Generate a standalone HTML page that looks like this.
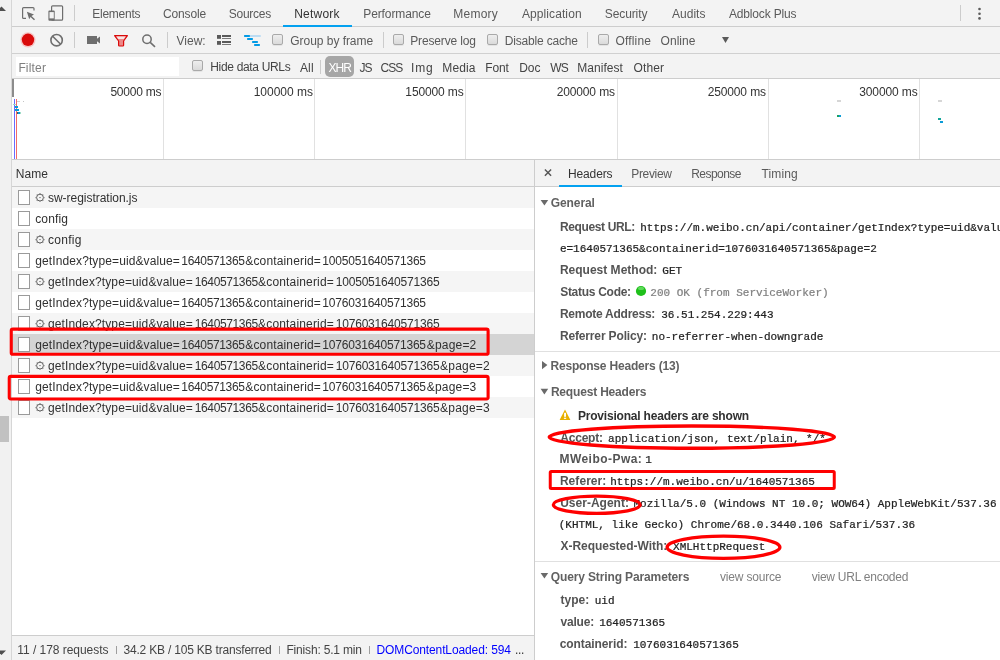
<!DOCTYPE html>
<html><head><meta charset="utf-8"><title>DevTools</title>
<style>
html,body{margin:0;padding:0;}
body{width:1000px;height:660px;position:relative;overflow:hidden;background:#fff;font:12px "Liberation Sans",sans-serif;}
.a{position:absolute;}
.t{position:absolute;white-space:pre;line-height:20px;height:20px;}
.s{font:12px "Liberation Sans",sans-serif;line-height:20px;}
.b{font:bold 12px "Liberation Sans",sans-serif;line-height:20px;}
.m{font:11px "Liberation Mono",monospace;line-height:20px;-webkit-text-stroke:0.22px currentColor;}
.cb{position:absolute;width:9px;height:9px;border:1px solid #a9a9a9;border-radius:2px;background:linear-gradient(#eeeeee,#dadada);box-shadow:0 1px 0 rgba(0,0,0,.06);}
.sep{position:absolute;width:1px;background:#ccc;}
.fi{position:absolute;left:18px;width:10px;height:13px;border:1px solid #9a9a9a;background:#fff;}
.row{position:absolute;left:12px;width:522px;height:21px;}
svg{position:absolute;overflow:visible;}
</style></head><body>

<!-- top toolbars background -->
<div class="a" style="left:0;top:0;width:1000px;height:78px;background:#f3f3f3;"></div>
<div class="a" style="left:12px;top:26px;width:988px;height:1px;background:#cdcdcd;"></div>
<div class="a" style="left:12px;top:53px;width:988px;height:1px;background:#d0d0d0;"></div>
<div class="a" style="left:12px;top:78px;width:988px;height:1px;background:#cdcdcd;"></div>
<!-- network tab underline -->
<div class="a" style="left:283px;top:25px;width:69px;height:2px;background:#03a1f0;"></div>

<!-- timeline overview -->
<div class="a" style="left:12px;top:79px;width:988px;height:80px;background:#fff;"></div>
<div class="a" style="left:163px;top:79px;width:1px;height:80px;background:#e1e1e1;"></div>
<div class="a" style="left:314px;top:79px;width:1px;height:80px;background:#e1e1e1;"></div>
<div class="a" style="left:465px;top:79px;width:1px;height:80px;background:#e1e1e1;"></div>
<div class="a" style="left:617px;top:79px;width:1px;height:80px;background:#e1e1e1;"></div>
<div class="a" style="left:768px;top:79px;width:1px;height:80px;background:#e1e1e1;"></div>
<div class="a" style="left:919px;top:79px;width:1px;height:80px;background:#e1e1e1;"></div>
<div class="a" style="left:12px;top:159px;width:988px;height:1px;background:#cdcdcd;"></div>
<!-- overview marks -->
<div class="a" style="left:12px;top:79px;width:2px;height:18px;background:#8c8c8c;"></div>
<div class="a" style="left:14px;top:99px;width:1px;height:60px;background:#6b6bff;"></div>
<div class="a" style="left:16px;top:99px;width:1px;height:60px;background:#f26a6a;"></div>
<div class="a" style="left:17px;top:101px;width:3px;height:1px;background:#d4d4d4;"></div>
<div class="a" style="left:23px;top:101px;width:1px;height:1px;background:#c4c4c4;"></div>
<div class="a" style="left:13px;top:104px;width:3px;height:1px;background:#9fdcc8;"></div>
<div class="a" style="left:15px;top:106px;width:3px;height:2px;background:#0a9bd8;"></div>
<div class="a" style="left:15px;top:109px;width:4px;height:2px;background:#0a9bd8;"></div>
<div class="a" style="left:17px;top:112px;width:1px;height:2px;background:#555;"></div>
<div class="a" style="left:18px;top:112px;width:2px;height:2px;background:#0a9bd8;"></div>
<div class="a" style="left:20px;top:112px;width:1px;height:2px;background:#9fdcc8;"></div>
<div class="a" style="left:837px;top:100px;width:4px;height:2px;background:#d6d6d6;"></div>
<div class="a" style="left:837px;top:115px;width:2px;height:2px;background:#1aa260;"></div><div class="a" style="left:839px;top:115px;width:2px;height:2px;background:#0a9bd8;"></div>
<div class="a" style="left:938px;top:100px;width:4px;height:2px;background:#d6d6d6;"></div>
<div class="a" style="left:938px;top:118px;width:3px;height:2px;background:#12a59a;"></div>
<div class="a" style="left:940px;top:121px;width:3px;height:2px;background:#0a9bd8;"></div>

<!-- grid header -->
<div class="a" style="left:12px;top:160px;width:988px;height:26px;background:#f3f3f3;"></div>
<div class="a" style="left:12px;top:186px;width:988px;height:1px;background:#cdcdcd;"></div>

<!-- rows -->
<div class="row" style="top:187px;background:#f5f5f5;"></div>
<div class="row" style="top:229px;background:#f5f5f5;"></div>
<div class="row" style="top:271px;background:#f5f5f5;"></div>
<div class="row" style="top:313px;background:#f5f5f5;"></div>
<div class="row" style="top:334px;background:#d4d4d4;"></div>
<div class="row" style="top:355px;background:#f5f5f5;"></div>
<div class="row" style="top:397px;background:#f5f5f5;"></div>
<div class="fi" style="top:190px;"></div>
<div class="fi" style="top:211px;"></div>
<div class="fi" style="top:232px;"></div>
<div class="fi" style="top:253px;"></div>
<div class="fi" style="top:274px;"></div>
<div class="fi" style="top:295px;"></div>
<div class="fi" style="top:316px;"></div>
<div class="fi" style="top:337px;"></div>
<div class="fi" style="top:358px;"></div>
<div class="fi" style="top:379px;"></div>
<div class="fi" style="top:400px;"></div>

<svg style="left:0;top:0" width="60" height="660" viewBox="0 0 60 660">
<circle cx="40.0" cy="197.6" r="3.4" fill="none" stroke="#505050" stroke-width="0.9"/><path d="M43.80 197.60L44.50 197.60M42.69 200.29L43.18 200.78M40.00 201.40L40.00 202.10M37.31 200.29L36.82 200.78M36.20 197.60L35.50 197.60M37.31 194.91L36.82 194.42M40.00 193.80L40.00 193.10M42.69 194.91L43.18 194.42" stroke="#777" stroke-width="1.3"/><path d="M39.2 197.6H40.8" stroke="#777" stroke-width="0.9"/>
<circle cx="40.0" cy="239.6" r="3.4" fill="none" stroke="#505050" stroke-width="0.9"/><path d="M43.80 239.60L44.50 239.60M42.69 242.29L43.18 242.78M40.00 243.40L40.00 244.10M37.31 242.29L36.82 242.78M36.20 239.60L35.50 239.60M37.31 236.91L36.82 236.42M40.00 235.80L40.00 235.10M42.69 236.91L43.18 236.42" stroke="#777" stroke-width="1.3"/><path d="M39.2 239.6H40.8" stroke="#777" stroke-width="0.9"/>
<circle cx="40.0" cy="281.6" r="3.4" fill="none" stroke="#505050" stroke-width="0.9"/><path d="M43.80 281.60L44.50 281.60M42.69 284.29L43.18 284.78M40.00 285.40L40.00 286.10M37.31 284.29L36.82 284.78M36.20 281.60L35.50 281.60M37.31 278.91L36.82 278.42M40.00 277.80L40.00 277.10M42.69 278.91L43.18 278.42" stroke="#777" stroke-width="1.3"/><path d="M39.2 281.6H40.8" stroke="#777" stroke-width="0.9"/>
<circle cx="40.0" cy="323.6" r="3.4" fill="none" stroke="#505050" stroke-width="0.9"/><path d="M43.80 323.60L44.50 323.60M42.69 326.29L43.18 326.78M40.00 327.40L40.00 328.10M37.31 326.29L36.82 326.78M36.20 323.60L35.50 323.60M37.31 320.91L36.82 320.42M40.00 319.80L40.00 319.10M42.69 320.91L43.18 320.42" stroke="#777" stroke-width="1.3"/><path d="M39.2 323.6H40.8" stroke="#777" stroke-width="0.9"/>
<circle cx="40.0" cy="365.6" r="3.4" fill="none" stroke="#505050" stroke-width="0.9"/><path d="M43.80 365.60L44.50 365.60M42.69 368.29L43.18 368.78M40.00 369.40L40.00 370.10M37.31 368.29L36.82 368.78M36.20 365.60L35.50 365.60M37.31 362.91L36.82 362.42M40.00 361.80L40.00 361.10M42.69 362.91L43.18 362.42" stroke="#777" stroke-width="1.3"/><path d="M39.2 365.6H40.8" stroke="#777" stroke-width="0.9"/>
<circle cx="40.0" cy="407.6" r="3.4" fill="none" stroke="#505050" stroke-width="0.9"/><path d="M43.80 407.60L44.50 407.60M42.69 410.29L43.18 410.78M40.00 411.40L40.00 412.10M37.31 410.29L36.82 410.78M36.20 407.60L35.50 407.60M37.31 404.91L36.82 404.42M40.00 403.80L40.00 403.10M42.69 404.91L43.18 404.42" stroke="#777" stroke-width="1.3"/><path d="M39.2 407.6H40.8" stroke="#777" stroke-width="0.9"/>
</svg>
<!-- status bar -->
<div class="a" style="left:12px;top:635px;width:522px;height:1px;background:#cdcdcd;"></div>
<div class="a" style="left:12px;top:636px;width:522px;height:24px;background:#f3f3f3;"></div>
<div class="a" style="left:116px;top:646px;width:1px;height:8px;background:#9e9e9e;"></div>
<div class="a" style="left:279px;top:646px;width:1px;height:8px;background:#9e9e9e;"></div>
<div class="a" style="left:369px;top:646px;width:1px;height:8px;background:#9e9e9e;"></div>

<!-- splitter -->
<div class="a" style="left:534px;top:160px;width:1px;height:500px;background:#cdcdcd;"></div>
<!-- right panel tab underline -->
<div class="a" style="left:559px;top:185px;width:63px;height:2px;background:#03a1f0;"></div>
<!-- section separators -->
<div class="a" style="left:535px;top:351px;width:465px;height:1px;background:#e0e0e0;"></div>
<div class="a" style="left:535px;top:561px;width:465px;height:1px;background:#e0e0e0;"></div>

<!-- left scrollbar strip -->
<div class="a" style="left:0;top:0;width:11px;height:660px;background:#f1f1f1;"></div>
<div class="a" style="left:11px;top:0;width:1px;height:660px;background:#d6d6d6;"></div>
<div class="a" style="left:0;top:416px;width:9px;height:26px;background:#c1c1c1;"></div>
<svg style="left:0;top:0" width="12" height="660"><path d="M-3 11 L1.5 6.5 L6 11 Z" fill="#505050"/><path d="M-3 650.5 L6 650.5 L1.5 655 Z" fill="#505050"/></svg>

<!-- toolbar filter input -->
<div class="a" style="left:16px;top:57px;width:163px;height:19px;background:#fff;"></div>
<!-- XHR pill -->
<div class="a" style="left:325px;top:56px;width:29px;height:21px;border-radius:5px;background:#a6a6a6;"></div>
<div class="sep" style="left:320px;top:60px;height:14px;"></div>

<!-- separators -->
<div class="sep" style="left:74px;top:5px;height:16px;"></div>
<div class="sep" style="left:960px;top:5px;height:16px;"></div>
<div class="sep" style="left:74px;top:32px;height:16px;"></div>
<div class="sep" style="left:167px;top:32px;height:16px;"></div>
<div class="sep" style="left:383px;top:32px;height:16px;"></div>
<div class="sep" style="left:587px;top:32px;height:16px;"></div>

<!-- checkboxes -->
<div class="cb" style="left:272px;top:34px;"></div>
<div class="cb" style="left:393px;top:34px;"></div>
<div class="cb" style="left:487px;top:34px;"></div>
<div class="cb" style="left:598px;top:34px;"></div>
<div class="cb" style="left:192px;top:60px;"></div>

<!-- ICONS -->
<svg style="left:0;top:0" width="1000" height="80" viewBox="0 0 1000 80">
 <!-- inspect -->
 <path d="M34 10.5 V8.6 Q34 7.6 33 7.6 H23.6 Q22.6 7.6 22.6 8.6 V17.4 Q22.6 18.4 23.6 18.4 H26" fill="none" stroke="#6e6e6e" stroke-width="1.2"/>
 <path d="M26.9 11.8 L34 14.5 L31.5 15.9 L35 19.3 L34 20.3 L30.5 16.9 L29.2 19.3 Z" fill="#6e6e6e"/>
 <!-- device -->
 <rect x="51.6" y="5.8" width="11" height="14.4" rx="1" fill="none" stroke="#6e6e6e" stroke-width="1.2"/>
 <rect x="48.4" y="10.4" width="6.3" height="10.3" rx="1" fill="#6e6e6e"/>
 <rect x="49.5" y="12.1" width="4.3" height="6.3" fill="#f3f3f3"/>
 <!-- kebab -->
 <circle cx="979.5" cy="9" r="1.3" fill="#5a5a5a"/><circle cx="979.5" cy="13.7" r="1.3" fill="#5a5a5a"/><circle cx="979.5" cy="18.4" r="1.3" fill="#5a5a5a"/>
 <!-- record -->
 <circle cx="28" cy="39.8" r="7.6" fill="#f6c4c4"/>
 <circle cx="28" cy="39.8" r="6.2" fill="#d90a0a"/>
 <!-- clear -->
 <circle cx="56.6" cy="40.2" r="5.7" fill="none" stroke="#6e6e6e" stroke-width="1.6"/>
 <path d="M52.6 36.2 L60.6 44.2" stroke="#6e6e6e" stroke-width="1.6"/>
 <!-- camera -->
 <path d="M87 36 H97 V38.8 L100 36.4 V43.6 L97 41.2 V44 H87 Z" fill="#6e6e6e"/>
 <!-- filter funnel -->
 <path d="M114.6 35.7 H127.4 L123.6 41 V45.2 Q123.6 46 122.8 46 H119.4 Q118.6 46 118.6 45.2 V41 Z" fill="#e88" stroke="#d90a0a" stroke-width="1.2" stroke-linejoin="round"/>
 <path d="M116.4 36.6 H125.6 L123.8 39 H118.2 Z" fill="#f8e4e4"/>
 <!-- search -->
 <circle cx="147" cy="39.2" r="4.2" fill="none" stroke="#6e6e6e" stroke-width="1.5"/>
 <path d="M150.2 42.4 L155 46.8" stroke="#6e6e6e" stroke-width="1.6"/>
 <!-- list icon -->
 <g fill="#5a5a5a">
  <rect x="217" y="35" width="4" height="3.8"/><rect x="222" y="35" width="9" height="2"/><rect x="222" y="38" width="9" height="0.8"/>
  <rect x="217" y="41" width="4" height="3.8"/><rect x="222" y="41" width="9" height="2"/><rect x="222" y="44" width="9" height="0.8"/>
 </g>
 <!-- waterfall icon -->
 <rect x="244" y="35" width="17" height="2" rx="1" fill="#bcdcf3"/>
 <g fill="#039be5">
  <rect x="244" y="35" width="6" height="2" rx="0.8"/>
  <rect x="247" y="38" width="6" height="2" rx="0.8"/>
  <rect x="252" y="41" width="6" height="2" rx="0.8"/>
  <rect x="254" y="44" width="6" height="2" rx="0.8"/>
 </g>
 <!-- dropdown arrow -->
 <path d="M722 37 H729 L725.5 43 Z" fill="#5a5a5a"/>
</svg>

<!-- right panel icons -->
<svg style="left:0;top:0" width="1000" height="660" viewBox="0 0 1000 660">
 <!-- close x -->
 <path d="M544.9 169.5 L551.1 175.7 M551.1 169.5 L544.9 175.7" stroke="#555" stroke-width="1.45"/>
 <!-- triangles -->
 <path d="M540.6 199.9 H548.2 L544.4 205.6 Z" fill="#6a6a6a"/>
 <path d="M542 361 L547.4 365.1 L542 369.2 Z" fill="#6a6a6a"/>
 <path d="M540.6 388.8 H548.2 L544.4 394.5 Z" fill="#6a6a6a"/>
 <path d="M540.6 572.9 H548.2 L544.4 578.6 Z" fill="#6a6a6a"/>
 <!-- status dot -->
 <circle cx="641" cy="291" r="5.1" fill="#1fc01b"/>
 <ellipse cx="641" cy="288.4" rx="3" ry="1.6" fill="#6ee06a" opacity=".8"/>
 <!-- warning -->
 <path d="M565 409.6 L570.4 419.9 H559.6 Z" fill="#e8b000"/>
 <rect x="564.1" y="412.8" width="1.9" height="4" fill="#fff"/><rect x="563.9" y="417.7" width="2.3" height="1.2" fill="#fff"/>
</svg>

<div id="txt" style="position:absolute;left:0;top:0;width:1000px;height:660px;will-change:transform;">
<span class="t s" style="left:92.25px;top:3.94px;color:#5a5a5a;letter-spacing:-0.258px;">Elements</span>
<span class="t s" style="left:162.98px;top:3.94px;color:#5a5a5a;letter-spacing:-0.126px;">Console</span>
<span class="t s" style="left:228.81px;top:3.94px;color:#5a5a5a;letter-spacing:-0.270px;">Sources</span>
<span class="t s" style="left:294.25px;top:3.94px;color:#333;letter-spacing:0.202px;">Network</span>
<span class="t s" style="left:363.25px;top:3.94px;color:#5a5a5a;letter-spacing:-0.107px;">Performance</span>
<span class="t s" style="left:453.25px;top:3.94px;color:#5a5a5a;letter-spacing:0.237px;">Memory</span>
<span class="t s" style="left:521.98px;top:3.94px;color:#5a5a5a;letter-spacing:0.089px;">Application</span>
<span class="t s" style="left:604.81px;top:3.94px;color:#5a5a5a;letter-spacing:-0.106px;">Security</span>
<span class="t s" style="left:671.98px;top:3.94px;color:#5a5a5a;letter-spacing:0.029px;">Audits</span>
<span class="t s" style="left:728.98px;top:3.94px;color:#5a5a5a;letter-spacing:-0.170px;">Adblock Plus</span>
<span class="t s" style="left:176.50px;top:30.94px;color:#5a5a5a;letter-spacing:0.014px;">View:</span>
<span class="t s" style="left:290.34px;top:30.94px;color:#5a5a5a;letter-spacing:-0.044px;">Group by frame</span>
<span class="t s" style="left:410.25px;top:30.94px;color:#5a5a5a;letter-spacing:-0.160px;">Preserve log</span>
<span class="t s" style="left:504.80px;top:30.94px;color:#5a5a5a;letter-spacing:-0.183px;">Disable cache</span>
<span class="t s" style="left:615.50px;top:30.94px;color:#5a5a5a;letter-spacing:0.156px;">Offline</span>
<span class="t s" style="left:660.50px;top:30.94px;color:#5a5a5a;letter-spacing:0.062px;">Online</span>
<span class="t s" style="left:18.39px;top:57.94px;color:#7f7f7f;letter-spacing:0.167px;">Filter</span>
<span class="t s" style="left:210.25px;top:57.44px;color:#444;letter-spacing:-0.327px;">Hide data URLs</span>
<span class="t s" style="left:299.98px;top:57.94px;color:#444;letter-spacing:0.142px;">All</span>
<span class="t s" style="left:359.50px;top:57.94px;color:#444;letter-spacing:-1.000px;">JS</span>
<span class="t s" style="left:380.55px;top:57.94px;color:#444;letter-spacing:-1.000px;">CSS</span>
<span class="t s" style="left:411.04px;top:57.94px;color:#444;letter-spacing:0.780px;">Img</span>
<span class="t s" style="left:442.25px;top:57.94px;color:#444;letter-spacing:0.135px;">Media</span>
<span class="t s" style="left:485.25px;top:57.94px;color:#444;letter-spacing:-0.105px;">Font</span>
<span class="t s" style="left:519.25px;top:57.94px;color:#444;letter-spacing:-0.058px;">Doc</span>
<span class="t s" style="left:550.35px;top:57.94px;color:#444;letter-spacing:-1.000px;">WS</span>
<span class="t s" style="left:577.25px;top:57.94px;color:#444;letter-spacing:0.049px;">Manifest</span>
<span class="t s" style="left:633.50px;top:57.94px;color:#444;letter-spacing:0.117px;">Other</span>
<span class="t s" style="left:328.50px;top:57.94px;color:#fff;letter-spacing:-1.000px;">XHR</span>
<span class="t s" style="left:110.38px;top:81.94px;color:#333;letter-spacing:-0.230px;">50000 ms</span>
<span class="t s" style="left:253.70px;top:81.94px;color:#333;letter-spacing:-0.022px;">100000 ms</span>
<span class="t s" style="left:405.36px;top:81.94px;color:#333;letter-spacing:-0.124px;">150000 ms</span>
<span class="t s" style="left:556.63px;top:81.94px;color:#333;letter-spacing:-0.125px;">200000 ms</span>
<span class="t s" style="left:707.63px;top:81.94px;color:#333;letter-spacing:-0.125px;">250000 ms</span>
<span class="t s" style="left:859.20px;top:81.94px;color:#333;letter-spacing:-0.109px;">300000 ms</span>
<span class="t s" style="left:15.80px;top:163.94px;color:#333;letter-spacing:0.054px;">Name</span>
<span class="t s" style="left:48.02px;top:187.94px;color:#303030;letter-spacing:-0.033px;">sw-registration.js</span>
<span class="t s" style="left:35.22px;top:208.94px;color:#303030;letter-spacing:0.126px;">config</span>
<span class="t s" style="left:48.03px;top:229.94px;color:#303030;letter-spacing:0.260px;">config</span>
<span class="t s" style="left:35.25px;top:250.94px;color:#303030;letter-spacing:0.106px;">getIndex?type=uid&amp;value=</span>
<span class="t s" style="left:181.36px;top:250.94px;color:#303030;letter-spacing:-0.355px;">1640571365</span>
<span class="t s" style="left:245.28px;top:250.94px;color:#303030;letter-spacing:0.152px;">&amp;containerid=</span>
<span class="t s" style="left:322.36px;top:250.94px;color:#303030;letter-spacing:-0.207px;">1005051640571365</span>
<span class="t s" style="left:48.05px;top:271.94px;color:#303030;letter-spacing:0.114px;">getIndex?type=uid&amp;value=</span>
<span class="t s" style="left:194.73px;top:271.94px;color:#303030;letter-spacing:-0.370px;">1640571365</span>
<span class="t s" style="left:258.06px;top:271.94px;color:#303030;letter-spacing:0.169px;">&amp;containerid=</span>
<span class="t s" style="left:335.73px;top:271.94px;color:#303030;letter-spacing:-0.194px;">1005051640571365</span>
<span class="t s" style="left:35.25px;top:292.94px;color:#303030;letter-spacing:0.106px;">getIndex?type=uid&amp;value=</span>
<span class="t s" style="left:181.36px;top:292.94px;color:#303030;letter-spacing:-0.355px;">1640571365</span>
<span class="t s" style="left:245.28px;top:292.94px;color:#303030;letter-spacing:0.152px;">&amp;containerid=</span>
<span class="t s" style="left:322.36px;top:292.94px;color:#303030;letter-spacing:-0.207px;">1076031640571365</span>
<span class="t s" style="left:48.05px;top:313.94px;color:#303030;letter-spacing:0.114px;">getIndex?type=uid&amp;value=</span>
<span class="t s" style="left:194.73px;top:313.94px;color:#303030;letter-spacing:-0.370px;">1640571365</span>
<span class="t s" style="left:258.06px;top:313.94px;color:#303030;letter-spacing:0.169px;">&amp;containerid=</span>
<span class="t s" style="left:335.73px;top:313.94px;color:#303030;letter-spacing:-0.194px;">1076031640571365</span>
<span class="t s" style="left:35.25px;top:334.94px;color:#303030;letter-spacing:0.106px;">getIndex?type=uid&amp;value=</span>
<span class="t s" style="left:181.36px;top:334.94px;color:#303030;letter-spacing:-0.355px;">1640571365</span>
<span class="t s" style="left:245.28px;top:334.94px;color:#303030;letter-spacing:0.152px;">&amp;containerid=</span>
<span class="t s" style="left:322.36px;top:334.94px;color:#303030;letter-spacing:-0.207px;">1076031640571365</span>
<span class="t s" style="left:426.77px;top:334.94px;color:#303030;letter-spacing:0.188px;">&amp;page=2</span>
<span class="t s" style="left:48.05px;top:355.94px;color:#303030;letter-spacing:0.114px;">getIndex?type=uid&amp;value=</span>
<span class="t s" style="left:194.73px;top:355.94px;color:#303030;letter-spacing:-0.370px;">1640571365</span>
<span class="t s" style="left:258.06px;top:355.94px;color:#303030;letter-spacing:0.169px;">&amp;containerid=</span>
<span class="t s" style="left:335.73px;top:355.94px;color:#303030;letter-spacing:-0.194px;">1076031640571365</span>
<span class="t s" style="left:440.06px;top:355.94px;color:#303030;letter-spacing:0.205px;">&amp;page=2</span>
<span class="t s" style="left:35.25px;top:376.94px;color:#303030;letter-spacing:0.106px;">getIndex?type=uid&amp;value=</span>
<span class="t s" style="left:181.36px;top:376.94px;color:#303030;letter-spacing:-0.355px;">1640571365</span>
<span class="t s" style="left:245.28px;top:376.94px;color:#303030;letter-spacing:0.152px;">&amp;containerid=</span>
<span class="t s" style="left:322.36px;top:376.94px;color:#303030;letter-spacing:-0.207px;">1076031640571365</span>
<span class="t s" style="left:426.77px;top:376.94px;color:#303030;letter-spacing:0.187px;">&amp;page=3</span>
<span class="t s" style="left:48.05px;top:397.94px;color:#303030;letter-spacing:0.114px;">getIndex?type=uid&amp;value=</span>
<span class="t s" style="left:194.73px;top:397.94px;color:#303030;letter-spacing:-0.370px;">1640571365</span>
<span class="t s" style="left:258.06px;top:397.94px;color:#303030;letter-spacing:0.169px;">&amp;containerid=</span>
<span class="t s" style="left:335.73px;top:397.94px;color:#303030;letter-spacing:-0.194px;">1076031640571365</span>
<span class="t s" style="left:440.06px;top:397.94px;color:#303030;letter-spacing:0.204px;">&amp;page=3</span>
<span class="t s" style="left:17.36px;top:639.94px;color:#444;letter-spacing:-0.044px;">11 / 178 requests</span>
<span class="t s" style="left:123.50px;top:639.94px;color:#444;letter-spacing:-0.197px;">34.2 KB / 105 KB transferred</span>
<span class="t s" style="left:286.47px;top:639.94px;color:#444;letter-spacing:-0.179px;">Finish: 5.1 min</span>
<span class="t s" style="left:376.48px;top:639.94px;color:#0000ff;letter-spacing:-0.113px;">DOMContentLoaded: 594</span>
<span class="t s" style="left:515.07px;top:639.94px;color:#333;letter-spacing:-0.395px;">...</span>
<span class="t s" style="left:568.05px;top:163.94px;color:#333;letter-spacing:-0.149px;">Headers</span>
<span class="t s" style="left:631.25px;top:163.94px;color:#5a5a5a;letter-spacing:-0.336px;">Preview</span>
<span class="t s" style="left:691.25px;top:163.94px;color:#5a5a5a;letter-spacing:-0.546px;">Response</span>
<span class="t s" style="left:761.50px;top:163.94px;color:#5a5a5a;letter-spacing:0.111px;">Timing</span>
<span class="t b" style="left:550.73px;top:193.24px;color:#616161;letter-spacing:-0.083px;">General</span>
<span class="t b" style="left:550.46px;top:355.84px;color:#616161;letter-spacing:-0.187px;">Response Headers (13)</span>
<span class="t b" style="left:550.88px;top:381.84px;color:#616161;letter-spacing:-0.178px;">Request Headers</span>
<span class="t b" style="left:550.72px;top:566.74px;color:#616161;letter-spacing:-0.127px;">Query String Parameters</span>
<span class="t s" style="left:720.00px;top:566.54px;color:#808080;letter-spacing:-0.187px;">view source</span>
<span class="t s" style="left:811.76px;top:566.54px;color:#808080;letter-spacing:-0.246px;">view URL encoded</span>
<span class="t b" style="left:559.88px;top:216.94px;color:#545454;letter-spacing:-0.352px;">Request URL:</span>
<span class="t m" style="left:640.21px;top:217.87px;color:#222;">https://m.weibo.cn/api/container/getIndex?type=uid&amp;valu</span>
<span class="t m" style="left:559.89px;top:238.97px;color:#222;">e=1640571365&amp;containerid=1076031640571365&amp;page=2</span>
<span class="t b" style="left:559.88px;top:260.24px;color:#545454;letter-spacing:0.009px;">Request Method:</span>
<span class="t m" style="left:662.33px;top:261.17px;color:#222;">GET</span>
<span class="t b" style="left:560.17px;top:282.14px;color:#545454;letter-spacing:-0.281px;">Status Code:</span>
<span class="t m" style="left:650.37px;top:283.07px;color:#808080;">200 OK (from ServiceWorker)</span>
<span class="t b" style="left:559.88px;top:303.94px;color:#545454;letter-spacing:-0.246px;">Remote Address:</span>
<span class="t m" style="left:661.27px;top:304.87px;color:#222;">36.51.254.229:443</span>
<span class="t b" style="left:559.88px;top:325.94px;color:#545454;letter-spacing:-0.146px;">Referrer Policy:</span>
<span class="t m" style="left:651.79px;top:326.87px;color:#222;">no-referrer-when-downgrade</span>
<span class="t b" style="left:577.94px;top:406.14px;color:#303030;letter-spacing:-0.199px;">Provisional headers are shown</span>
<span class="t b" style="left:560.35px;top:427.64px;color:#545454;letter-spacing:-0.233px;">Accept:</span>
<span class="t m" style="left:608.07px;top:428.57px;color:#222;">application/json, text/plain, */*</span>
<span class="t b" style="left:559.47px;top:448.94px;color:#545454;letter-spacing:0.456px;">MWeibo-Pwa:</span>
<span class="t m" style="left:645.16px;top:449.87px;color:#222;">1</span>
<span class="t b" style="left:559.88px;top:470.94px;color:#545454;letter-spacing:0.063px;">Referer:</span>
<span class="t m" style="left:610.21px;top:471.87px;color:#222;">https://m.weibo.cn/u/1640571365</span>
<span class="t b" style="left:560.19px;top:492.64px;color:#545454;letter-spacing:0.010px;">User-Agent:</span>
<span class="t m" style="left:633.50px;top:493.57px;color:#222;">Mozilla/5.0 (Windows NT 10.0; WOW64) AppleWebKit/537.36</span>
<span class="t m" style="left:558.77px;top:515.17px;color:#222;">(KHTML, like Gecko) Chrome/68.0.3440.106 Safari/537.36</span>
<span class="t b" style="left:560.44px;top:535.94px;color:#545454;letter-spacing:-0.025px;">X-Requested-With:</span>
<span class="t m" style="left:673.04px;top:536.87px;color:#222;">XMLHttpRequest</span>
<span class="t b" style="left:560.61px;top:589.94px;color:#545454;">type:</span>
<span class="t m" style="left:594.77px;top:590.87px;color:#222;">uid</span>
<span class="t b" style="left:560.51px;top:611.74px;color:#545454;letter-spacing:-0.189px;">value:</span>
<span class="t m" style="left:599.16px;top:612.67px;color:#222;">1640571365</span>
<span class="t b" style="left:559.78px;top:633.74px;color:#545454;letter-spacing:-0.094px;">containerid:</span>
<span class="t m" style="left:633.16px;top:634.67px;color:#222;">1076031640571365</span>
</div>

<!-- red annotations -->
<svg style="left:0;top:0" width="1000" height="660" viewBox="0 0 1000 660">
 <g fill="none" stroke="#fe0000">
  <rect x="11.25" y="329.15" width="476.85" height="25.1" rx="1.6" stroke-width="3.1"/>
  <rect x="9.25" y="376.35" width="478.85" height="22.6" rx="1.6" stroke-width="3.1"/>
  <ellipse cx="691.8" cy="437.1" rx="142.6" ry="11.1" stroke-width="3.4"/>
  <rect x="550.25" y="471.5" width="284" height="17" rx="1" stroke-width="3"/>
  <ellipse cx="596.75" cy="504.7" rx="43.4" ry="8.6" stroke-width="3.3"/>
  <ellipse cx="723.5" cy="547.2" rx="56.4" ry="11.1" stroke-width="3.3"/>
 </g>
</svg>
</body></html>
